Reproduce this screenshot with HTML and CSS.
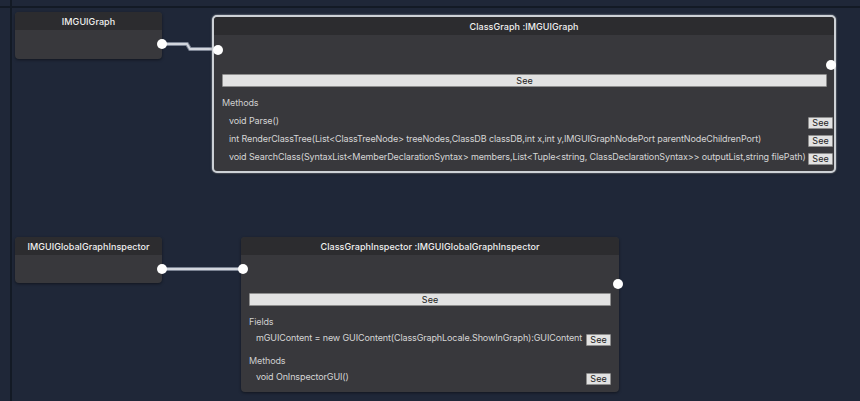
FILE: index.html
```html
<!DOCTYPE html>
<html>
<head>
<meta charset="utf-8">
<title>Class Graph</title>
<link rel="stylesheet" href="styles.css">
</head>
<body>
<div class="canvas">
  <div class="grid-v"></div>
  <div class="grid-h"></div>

  <svg class="edges" width="860" height="401" viewBox="0 0 860 401">
    <path class="edge-outer" d="M161 44 H187 L190 49 H216"/>
    <path class="edge-inner" d="M161 44 H187 L190 49 H216"/>
    <path class="edge-outer" d="M161 269 H242"/>
    <path class="edge-inner" d="M161 269 H242"/>
  </svg>

  <div class="node small n-graph">
    <div class="head">IMGUIGraph</div>
    <div class="body"></div>
    <span class="port port-small-out"></span>
  </div>

  <div class="node big n-classgraph selected">
    <div class="head">ClassGraph :IMGUIGraph</div>
    <div class="body content">
      <button class="wide-btn">See</button>
      <div class="label">Methods</div>
      <div class="row"><span class="txt">void Parse()</span><button class="see">See</button></div>
      <div class="row"><span class="txt">int RenderClassTree(List&lt;ClassTreeNode&gt; treeNodes,ClassDB classDB,int x,int y,IMGUIGraphNodePort parentNodeChildrenPort)</span><button class="see">See</button></div>
      <div class="row"><span class="txt">void SearchClass(SyntaxList&lt;MemberDeclarationSyntax&gt; members,List&lt;Tuple&lt;string, ClassDeclarationSyntax&gt;&gt; outputList,string filePath)</span><button class="see">See</button></div>
    </div>
    <span class="port port-cg-in"></span>
    <span class="port port-cg-out"></span>
  </div>

  <div class="node small n-inspector">
    <div class="head">IMGUIGlobalGraphInspector</div>
    <div class="body"></div>
    <span class="port port-small-out"></span>
  </div>

  <div class="node big n-cginspector">
    <div class="head">ClassGraphInspector :IMGUIGlobalGraphInspector</div>
    <div class="body content">
      <button class="wide-btn">See</button>
      <div class="label">Fields</div>
      <div class="row"><span class="txt">mGUIContent = new GUIContent(ClassGraphLocale.ShowInGraph):GUIContent</span><button class="see">See</button></div>
      <div class="label section">Methods</div>
      <div class="row"><span class="txt">void OnInspectorGUI()</span><button class="see">See</button></div>
    </div>
    <span class="port port-ci-in"></span>
    <span class="port port-ci-out"></span>
  </div>
</div>
</body>
</html>
```

FILE: styles.css
```css
* { box-sizing: border-box; }

body {
  margin: 0;
  background: #1f2738;
  font-family: Inter, "Noto Sans", sans-serif;
}

.canvas {
  position: relative;
  width: 860px;
  height: 401px;
  overflow: hidden;
  background: #1f2738;
}

.grid-v {
  position: absolute;
  left: 10px;
  top: 0;
  width: 2px;
  height: 100%;
  background: #131a25;
}

.grid-h {
  position: absolute;
  left: 0;
  top: 6px;
  width: 100%;
  height: 2px;
  background: #131a25;
}

.edges {
  position: absolute;
  left: 0;
  top: 0;
}

.edge-outer {
  fill: none;
  stroke: #7a8292;
  stroke-width: 4;
}

.edge-inner {
  fill: none;
  stroke: #d2d6dd;
  stroke-width: 2;
}

.node {
  position: absolute;
  display: flex;
  flex-direction: column;
  background: #38383c;
  border-radius: 4px;
  box-shadow: 0 1px 3px rgba(0, 0, 0, 0.45);
}

.head {
  height: 18px;
  flex: none;
  display: flex;
  align-items: center;
  justify-content: center;
  background: #2c2c2f;
  color: #f0f0f0;
  font-size: 9px;
  font-weight: 500;
  letter-spacing: 0.05px;
  border-radius: 4px 4px 0 0;
}

.body {
  flex: 1;
}

.n-graph {
  left: 15px;
  top: 12px;
  width: 147px;
  height: 47px;
}

.n-inspector {
  left: 15px;
  top: 237px;
  width: 147px;
  height: 46px;
}

.n-classgraph {
  left: 212px;
  top: 15px;
  width: 624px;
  height: 158px;
}

.selected {
  border: 2px solid #cdd1d6;
  box-shadow: 0 0 2px rgba(215, 220, 226, 0.8), 0 1px 3px rgba(0, 0, 0, 0.4);
  border-radius: 5px;
}

.n-cginspector {
  left: 241px;
  top: 237px;
  width: 378px;
  height: 155px;
}

.content {
  display: flex;
  flex-direction: column;
  padding: 38px 8px 6px 8px;
  color: #d6d6d6;
  font-size: 9px;
  letter-spacing: -0.12px;
}

.n-classgraph .content {
  padding: 39px 7px 6px 8px;
}

.n-classgraph .row {
  margin-right: -6px;
}

.wide-btn {
  height: 13px;
  padding: 0;
  border: 1px solid #8e8e8e;
  border-radius: 1px;
  background: #e2e2e2;
  color: #1b1b1b;
  font-family: inherit;
  font-size: 9px;
  line-height: 11px;
}

.label {
  margin-top: 10px;
  height: 12px;
  line-height: 12px;
  color: #cfcfcf;
}

.label.section {
  margin-top: 8px;
}

.row {
  height: 18px;
  margin-top: 1px;
  display: flex;
  justify-content: space-between;
  align-items: flex-end;
  padding-left: 7px;
}

.row + .row {
  margin-top: 0;
}

.n-classgraph .label + .row {
  margin-top: 3px;
}

.txt {
  align-self: center;
  line-height: 12px;
  white-space: nowrap;
}

.see {
  flex: none;
  width: 25px;
  height: 12px;
  padding: 0;
  margin-bottom: 1px;
  border: 1px solid #8e8e8e;
  border-radius: 1px;
  background: #e2e2e2;
  color: #1b1b1b;
  font-family: inherit;
  font-size: 9px;
  line-height: 10px;
}

.port {
  position: absolute;
  width: 10px;
  height: 10px;
  border-radius: 50%;
  background: #ffffff;
}

.port-small-out {
  right: -5px;
  top: 27px;
}

.port-cg-in {
  left: -1px;
  top: 28px;
}

.port-cg-out {
  right: -2px;
  top: 43px;
}

.port-ci-in {
  left: -3px;
  top: 27px;
}

.port-ci-out {
  right: -4px;
  top: 42px;
}
```
